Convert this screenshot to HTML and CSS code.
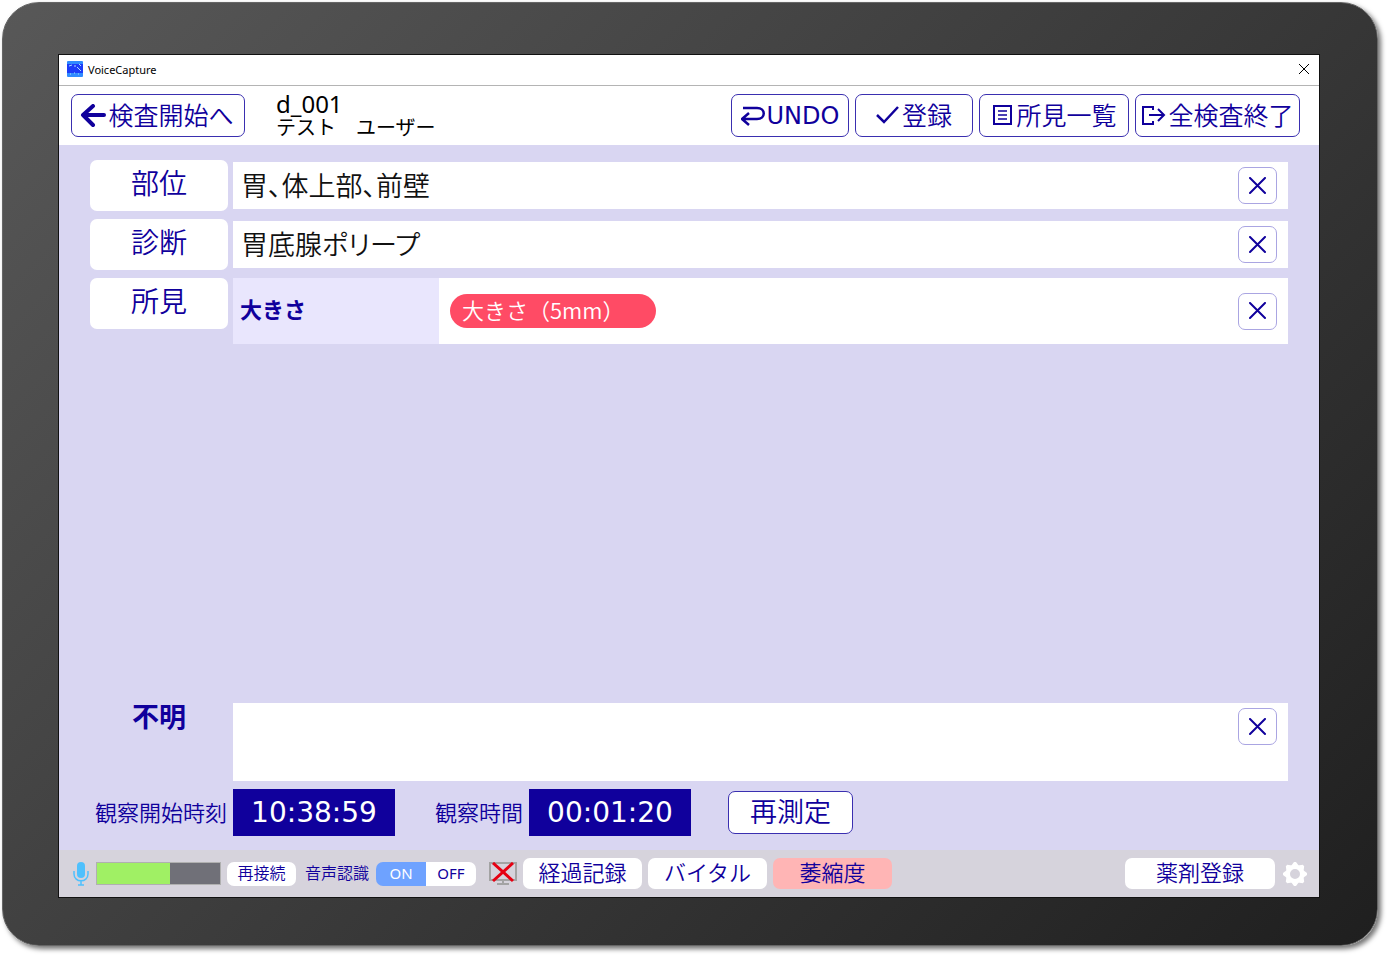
FILE: index.html
```html
<!DOCTYPE html>
<html lang="ja">
<head>
    <meta charset="UTF-8">
    <meta name="viewport" content="width=device-width, initial-scale=1.0">
    <title>VoiceCapture</title>
    <link rel="stylesheet" href="styles.css">
</head>
<body>
    <div class="tablet">
        <div class="screen">
            <div class="titlebar">
                <svg class="app-icon" width="16" height="16" viewBox="0 0 16 16">
                    <rect width="16" height="16" rx="1" fill="#2f8bff"/>
                    <rect y="3" width="16" height="9" fill="#1c3cf8"/>
                    <path d="M2 5l3-1M7 5h2M10 6l4 4M12 3l2 2M3 13h1M7 12h1M11 13h1" stroke="#a9dcff" fill="none"/>
                </svg>
                <span class="app-name">VoiceCapture</span>
                <button class="window-close" aria-label="閉じる">
                    <svg width="12" height="12" viewBox="0 0 12 12"><path d="M1 1l10 10M11 1L1 11" stroke="#000" fill="none"/></svg>
                </button>
            </div>

            <header class="header">
                <button class="btn btn-back">
                    <svg width="28" height="24" viewBox="0 0 28 24"><path d="M13 2L3 11l10 10M3 11h21" fill="none" stroke="currentColor" stroke-width="4" stroke-linecap="round" stroke-linejoin="round"/></svg><span class="label">検査開始へ</span>
                </button>
                <div class="patient">
                    <div class="patient-id">d_001</div>
                    <div class="patient-name">テスト　ユーザー</div>
                </div>
                <div class="header-actions">
                    <button class="btn">
                        <svg width="26" height="22" viewBox="0 0 26 22"><path d="M2 3h14c9 0 9 11 0 11H2M8 8l-7 6 7 6" fill="none" stroke="currentColor" stroke-width="2.5" stroke-linejoin="round"/></svg><span class="latin">UNDO</span>
                    </button>
                    <button class="btn">
                        <svg width="26" height="22" viewBox="0 0 26 22"><path d="M1 10l7 7L22 2" fill="none" stroke="currentColor" stroke-width="2.5"/></svg><span class="label">登録</span>
                    </button>
                    <button class="btn btn-wide">
                        <svg width="25" height="22" viewBox="0 0 25 22"><path d="M3 1h17v18H3z" fill="none" stroke="currentColor" stroke-width="2"/><path d="M7 6h9M7 10h9M7 14h9" stroke="currentColor" stroke-width="1.5"/></svg><span class="label">所見一覧</span>
                    </button>
                    <button class="btn btn-exit">
                        <svg width="27" height="22" viewBox="0 0 27 22"><path d="M12 5V2H2v17h10v-3M8 10h14M17 4l6 6-6 6" fill="none" stroke="currentColor" stroke-width="2"/></svg><span class="label">全検査終了</span>
                    </button>
                </div>
            </header>

            <main class="form">
                <div class="row">
                    <button class="row-btn">部位</button>
                    <div class="field">
                        <input type="text" aria-label="部位" value="胃、体上部、前壁">
                        <button class="clear" aria-label="部位をクリア"><svg width="18" height="18" viewBox="0 0 18 18"><path d="M1 1l15 15M16 1L1 16"/></svg></button>
                    </div>
                </div>
                <div class="row">
                    <button class="row-btn">診断</button>
                    <div class="field">
                        <input type="text" aria-label="診断" value="胃底腺ポリープ">
                        <button class="clear" aria-label="診断をクリア"><svg width="18" height="18" viewBox="0 0 18 18"><path d="M1 1l15 15M16 1L1 16"/></svg></button>
                    </div>
                </div>
                <div class="row">
                    <button class="row-btn">所見</button>
                    <div class="field field-finding">
                        <div class="finding-name">大きさ</div>
                        <div class="finding-values"><span class="tag">大きさ（5mm）</span></div>
                        <button class="clear" aria-label="所見をクリア"><svg width="18" height="18" viewBox="0 0 18 18"><path d="M1 1l15 15M16 1L1 16"/></svg></button>
                    </div>
                </div>

                <div class="row row-unknown">
                    <label class="unknown-label" for="unknown">不明</label>
                    <div class="field field-unknown">
                        <textarea id="unknown"></textarea>
                        <button class="clear" aria-label="不明をクリア"><svg width="18" height="18" viewBox="0 0 18 18"><path d="M1 1l15 15M16 1L1 16"/></svg></button>
                    </div>
                </div>

                <div class="times">
                    <label class="time-label time-label-start" for="start-time">観察開始時刻</label>
                    <output class="clock" id="start-time">10:38:59</output>
                    <label class="time-label time-label-elapsed" for="elapsed">観察時間</label>
                    <output class="clock" id="elapsed">00:01:20</output>
                    <button class="btn btn-remeasure"><span class="label">再測定</span></button>
                </div>
            </main>

            <footer class="footer">
                <svg class="mic" width="18" height="24" viewBox="0 0 18 24">
                    <rect x="5" y="0" width="8" height="16" rx="4" fill="#4fc0fd"/>
                    <path d="M2 9v3c0 9 14 9 14 0V9M9 19v4M6 23h6" fill="none" stroke="#4fc0fd" stroke-width="1.5"/>
                </svg>
                <meter class="level" min="0" max="100" value="59" aria-label="音量"></meter>
                <button class="small-btn">再接続</button>
                <fieldset class="voice">
                    <legend class="voice-label">音声認識</legend>
                    <div class="toggle">
                        <input type="radio" name="voice" id="voice-on" checked>
                        <label for="voice-on">ON</label>
                        <input type="radio" name="voice" id="voice-off">
                        <label for="voice-off">OFF</label>
                    </div>
                </fieldset>
                <svg class="monitor" width="30" height="24" viewBox="0 0 30 24">
                    <path d="M2 1h26v17H2zM15 18v4M9 22h12" fill="none" stroke="#a3a3a3" stroke-width="2"/>
                    <path d="M5 1l20 18M25 1L5 19" stroke="#e60012" stroke-width="3"/>
                </svg>
                <div class="footer-actions">
                    <button class="foot-btn">経過記録</button>
                    <button class="foot-btn">バイタル</button>
                    <button class="foot-btn foot-btn-alert">萎縮度</button>
                </div>
                <button class="foot-btn foot-btn-drug">薬剤登録</button>
                <button class="settings" aria-label="設定">
                    <svg width="26" height="26" viewBox="-13 -13 26 26">
                        <circle r="7" fill="none" stroke="#fff" stroke-width="4"/>
                        <g fill="#fff">
                            <path id="tooth" d="M-4-8l3-4h2l3 4z"/>
                            <use href="#tooth" transform="rotate(45)"/>
                            <use href="#tooth" transform="rotate(90)"/>
                            <use href="#tooth" transform="rotate(135)"/>
                            <use href="#tooth" transform="rotate(180)"/>
                            <use href="#tooth" transform="rotate(225)"/>
                            <use href="#tooth" transform="rotate(270)"/>
                            <use href="#tooth" transform="rotate(315)"/>
                        </g>
                    </svg>
                </button>
            </footer>
        </div>
    </div>
</body>
</html>
```
FILE: styles.css
```css
* {
    box-sizing: border-box;
}

body {
    margin: 0;
    padding: 2px 10px 10px 2px;
    min-height: 100vh;
    display: flex;
    background: #fff;
    color: #10009c;
    font-family: "Noto Sans CJK JP", sans-serif;
    font-weight: 350;
}

button,
input,
textarea {
    font: inherit;
    color: inherit;
}

button {
    padding: 0;
    border: none;
    background: #fff;
    cursor: pointer;
    white-space: nowrap;
}

svg {
    display: block;
    flex: none;
}

.tablet {
    flex: 1;
    display: flex;
    padding: 52px 58px 48px 56px;
    border: 1px solid #666;
    border-radius: 37px;
    background: linear-gradient(135deg, #585858, #1f1f1f);
    box-shadow: 3px 3px 5px rgba(0, 0, 0, 0.55);
}

.screen {
    flex: 1;
    min-width: 0;
    display: flex;
    flex-direction: column;
    background: #d9d6f2;
    outline: 1px solid #111;
}

/* title bar */
.titlebar {
    display: flex;
    align-items: center;
    height: 31px;
    padding: 0 8px 2px;
    background: #fff;
    border-bottom: 1px solid #b4b4b4;
    color: #000;
}

.app-name {
    flex: 1;
    margin-left: 5px;
    font: 11px "Noto Sans", sans-serif;
}

.window-close {
    padding: 1px;
}

/* header */
.header {
    display: flex;
    align-items: center;
    height: 59px;
    padding: 0 19px 0 12px;
    background: #fff;
}

.btn {
    display: flex;
    align-items: center;
    justify-content: center;
    width: 118px;
    height: 43px;
    border: 1px solid #3a2fb0;
    border-radius: 7px;
    font-size: 25px;
}

.btn-back {
    width: 174px;
    padding-right: 2px;
}

.btn-wide {
    width: 150px;
}

.btn-exit {
    width: 165px;
}

.label {
    padding-bottom: 4px;
}

.latin {
    font-family: "DejaVu Sans", sans-serif;
    font-size: 24px;
    font-weight: 400;
}

.patient {
    margin-left: 31px;
    padding-bottom: 2px;
    color: #000;
    line-height: 23px;
    font-weight: 400;
}

.patient-id {
    font-family: "Noto Sans", sans-serif;
    font-size: 24px;
}

.patient-name {
    font-size: 20px;
}

.header-actions {
    display: flex;
    gap: 6px;
    margin-left: auto;
}

/* form */
.form {
    flex: 1;
    display: flex;
    flex-direction: column;
    gap: 8px;
    padding: 15px 31px 14px;
}

.row {
    display: grid;
    grid-template-columns: 138px 1fr;
    gap: 5px;
    align-items: center;
}

.row-btn {
    height: 51px;
    padding-bottom: 8px;
    border-radius: 7px;
    font-size: 28px;
    line-height: 40px;
    align-self: start;
}

.field {
    display: flex;
    align-items: center;
    height: 47px;
    padding-right: 11px;
    background: #fff;
}

.field input {
    flex: 1;
    min-width: 0;
    padding: 0 8px 2px;
    border: none;
    background: none;
    color: #111;
    font-size: 27px;
    line-height: 40px;
    font-feature-settings: "palt";
}

.clear {
    display: flex;
    align-items: center;
    justify-content: center;
    width: 39px;
    height: 37px;
    border: 1px solid #aaa5e2;
    border-radius: 7px;
}

.clear path {
    fill: none;
    stroke: #10009c;
    stroke-width: 2;
    stroke-linecap: round;
}

.field-finding {
    height: 66px;
}

.finding-name {
    display: flex;
    align-items: center;
    align-self: stretch;
    width: 206px;
    padding: 0 0 6px 7px;
    background: #e9e6fd;
    font-size: 22px;
    font-weight: 700;
}

.finding-values {
    flex: 1;
    padding: 0 11px;
}

.tag {
    display: inline-block;
    min-width: 206px;
    padding: 0 12px 4px;
    border-radius: 17px;
    background: #ff4b65;
    color: #fff;
    font-size: 22px;
    line-height: 30px;
}

.row-unknown {
    margin-top: auto;
    align-items: start;
}

.unknown-label {
    text-align: center;
    font-size: 27px;
    font-weight: 700;
    line-height: 26px;
}

.field-unknown {
    height: 78px;
    align-items: flex-start;
    padding-top: 5px;
}

.field-unknown textarea {
    flex: 1;
    align-self: stretch;
    border: none;
    background: none;
    resize: none;
    font-size: 27px;
}

.times {
    display: flex;
    align-items: center;
}

.time-label {
    padding: 0 6px 4px 0;
    font-size: 22px;
    text-align: right;
}

.time-label-start {
    width: 143px;
}

.time-label-elapsed {
    width: 134px;
}

.clock {
    width: 162px;
    background: #10009c;
    color: #fff;
    font-family: "DejaVu Sans", sans-serif;
    font-size: 28px;
    font-weight: 400;
    line-height: 47px;
    text-align: center;
}

.btn-remeasure {
    width: 125px;
    margin-left: 37px;
    font-size: 27px;
}

/* footer */
.footer {
    display: flex;
    align-items: center;
    height: 47px;
    padding: 0 11px 0 13px;
    background: #d6d3dc;
}

.level {
    appearance: none;
    display: block;
    width: 125px;
    height: 23px;
    margin: 0 6px;
    border: 1px solid #b0b0b0;
    background: #707078;
}

.level::-webkit-meter-inner-element {
    appearance: none;
    display: block;
    height: 100%;
}

.level::-webkit-meter-bar {
    position: static;
    height: 100%;
    margin: 0;
    border: none;
    border-radius: 0;
    transform: none;
    background: #707078;
}

.level::-webkit-meter-optimum-value {
    position: static;
    height: 100%;
    margin: 0;
    transform: none;
    background: #a0f064;
}

.small-btn {
    width: 69px;
    height: 24px;
    padding-bottom: 4px;
    border-radius: 7px;
    font-size: 16px;
    line-height: 20px;
}

.voice {
    display: flex;
    margin: 0 12px 0 9px;
    padding: 0;
    border: none;
    font-size: 16px;
    line-height: 24px;
}

.voice-label {
    float: left;
    padding: 0 7px 0 0;
    line-height: 20px;
}

.toggle {
    display: flex;
    border-radius: 7px;
    overflow: hidden;
}

.toggle input {
    position: absolute;
    opacity: 0;
}

.toggle label {
    width: 50px;
    padding-bottom: 2px;
    background: #fff;
    font-family: "Noto Sans", sans-serif;
    font-size: 15px;
    font-weight: 400;
    line-height: 22px;
    text-align: center;
}

.toggle input:checked + label {
    background: #6ea2ff;
    color: #fff;
}

.footer-actions {
    display: flex;
    gap: 6px;
    margin-left: 5px;
}

.foot-btn {
    width: 119px;
    height: 31px;
    padding-bottom: 5px;
    border-radius: 7px;
    font-size: 22px;
    line-height: 26px;
}

.foot-btn-alert {
    background: #ffb5b5;
}

.foot-btn-drug {
    width: 150px;
    margin-left: auto;
}

.settings {
    margin-left: 7px;
    background: none;
}
```
